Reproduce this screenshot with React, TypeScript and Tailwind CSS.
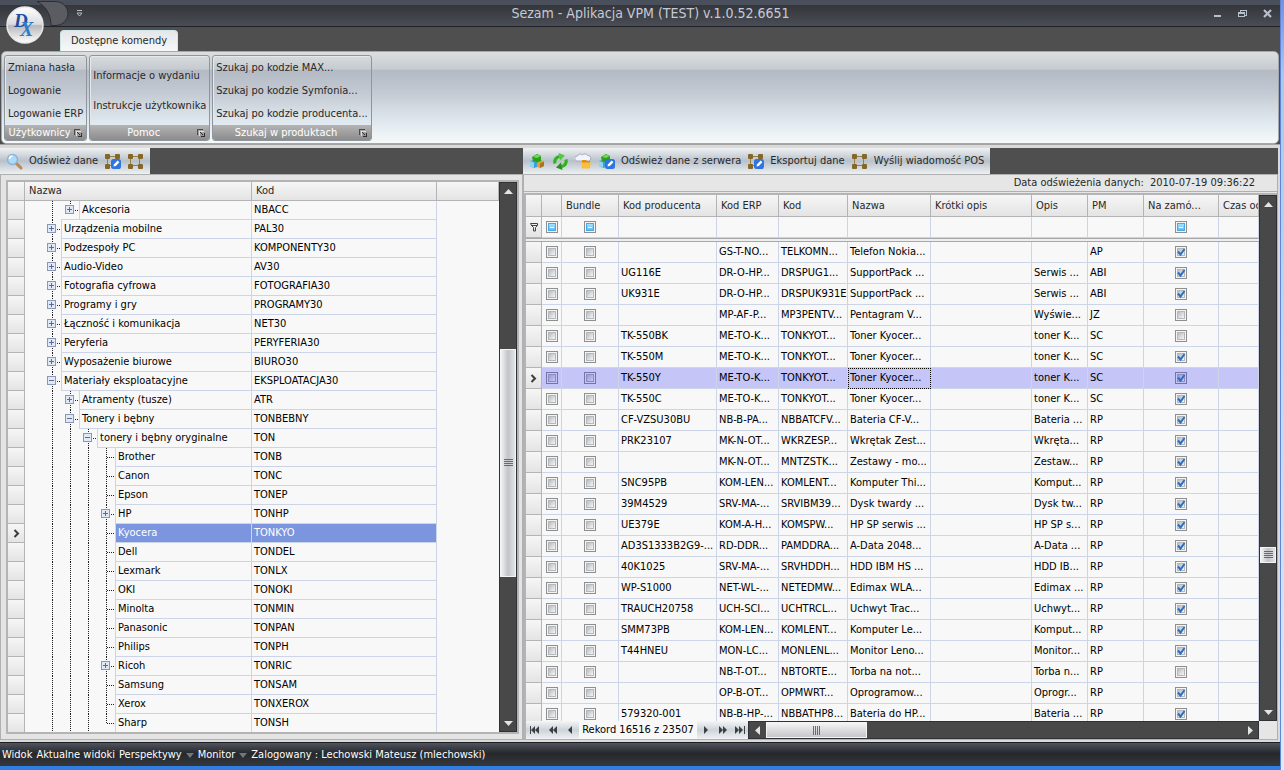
import { useId, type ReactNode } from "react";
import { clsx } from "clsx";

type TreeItem = {
  name: string;
  code: string;
  depth: number;
  state?: "open" | "closed";
  last?: boolean;
  selected?: boolean;
};

const treeItems: TreeItem[] = [
  { name: "Akcesoria", code: "NBACC", depth: 2, state: "closed", last: true },
  { name: "Urządzenia mobilne", code: "PAL30", depth: 1, state: "closed" },
  { name: "Podzespoły PC", code: "KOMPONENTY30", depth: 1, state: "closed" },
  { name: "Audio-Video", code: "AV30", depth: 1, state: "closed" },
  { name: "Fotografia cyfrowa", code: "FOTOGRAFIA30", depth: 1, state: "closed" },
  { name: "Programy i gry", code: "PROGRAMY30", depth: 1, state: "closed" },
  { name: "Łączność i komunikacja", code: "NET30", depth: 1, state: "closed" },
  { name: "Peryferia", code: "PERYFERIA30", depth: 1, state: "closed" },
  { name: "Wyposażenie biurowe", code: "BIURO30", depth: 1, state: "closed" },
  { name: "Materiały eksploatacyjne", code: "EKSPLOATACJA30", depth: 1, state: "open" },
  { name: "Atramenty (tusze)", code: "ATR", depth: 2, state: "closed" },
  { name: "Tonery i bębny", code: "TONBEBNY", depth: 2, state: "open" },
  { name: "tonery i bębny oryginalne", code: "TON", depth: 3, state: "open" },
  { name: "Brother", code: "TONB", depth: 4 },
  { name: "Canon", code: "TONC", depth: 4 },
  { name: "Epson", code: "TONEP", depth: 4 },
  { name: "HP", code: "TONHP", depth: 4, state: "closed" },
  { name: "Kyocera", code: "TONKYO", depth: 4, selected: true },
  { name: "Dell", code: "TONDEL", depth: 4 },
  { name: "Lexmark", code: "TONLX", depth: 4 },
  { name: "OKI", code: "TONOKI", depth: 4 },
  { name: "Minolta", code: "TONMIN", depth: 4 },
  { name: "Panasonic", code: "TONPAN", depth: 4 },
  { name: "Philips", code: "TONPH", depth: 4 },
  { name: "Ricoh", code: "TONRIC", depth: 4, state: "closed" },
  { name: "Samsung", code: "TONSAM", depth: 4 },
  { name: "Xerox", code: "TONXEROX", depth: 4 },
  { name: "Sharp", code: "TONSH", depth: 4, last: true },
];

type Product = {
  producer: string;
  erp: string;
  code: string;
  name: string;
  desc: string;
  pm: string;
  onOrder: boolean;
  selected?: boolean;
};

const products: Product[] = [
  { producer: "", erp: "GS-T-NO...", code: "TELKOMN...", name: "Telefon Nokia...", desc: "", pm: "AP", onOrder: true },
  { producer: "UG116E", erp: "DR-O-HP...", code: "DRSPUG1...", name: "SupportPack ...", desc: "Serwis ...", pm: "ABI", onOrder: true },
  { producer: "UK931E", erp: "DR-O-HP...", code: "DRSPUK931E", name: "SupportPack ...", desc: "Serwis ...", pm: "ABI", onOrder: true },
  { producer: "", erp: "MP-AF-P...", code: "MP3PENTV...", name: "Pentagram V...", desc: "Wyświe...", pm: "JZ", onOrder: false },
  { producer: "TK-550BK", erp: "ME-TO-K...", code: "TONKYOT...", name: "Toner Kyocer...", desc: "toner K...", pm: "SC", onOrder: false },
  { producer: "TK-550M", erp: "ME-TO-K...", code: "TONKYOT...", name: "Toner Kyocer...", desc: "toner K...", pm: "SC", onOrder: true },
  { producer: "TK-550Y", erp: "ME-TO-K...", code: "TONKYOT...", name: "Toner Kyocer...", desc: "toner K...", pm: "SC", onOrder: true, selected: true },
  { producer: "TK-550C", erp: "ME-TO-K...", code: "TONKYOT...", name: "Toner Kyocer...", desc: "toner K...", pm: "SC", onOrder: true },
  { producer: "CF-VZSU30BU", erp: "NB-B-PA...", code: "NBBATCFV...", name: "Bateria CF-V...", desc: "Bateria ...", pm: "RP", onOrder: true },
  { producer: "PRK23107", erp: "MK-N-OT...", code: "WKRZESP...", name: "Wkrętak Zest...", desc: "Wkręta...", pm: "RP", onOrder: true },
  { producer: "", erp: "MK-N-OT...", code: "MNTZSTK...", name: "Zestawy - mo...", desc: "Zestaw...", pm: "RP", onOrder: true },
  { producer: "SNC95PB", erp: "KOM-LEN...", code: "KOMLENT...", name: "Komputer Thi...", desc: "Komput...", pm: "RP", onOrder: true },
  { producer: "39M4529", erp: "SRV-MA-...", code: "SRVIBM39...", name: "Dysk twardy ...", desc: "Dysk tw...", pm: "RP", onOrder: true },
  { producer: "UE379E", erp: "KOM-A-H...", code: "KOMSPW...", name: "HP SP serwis ...", desc: "HP SP s...", pm: "RP", onOrder: true },
  { producer: "AD3S1333B2G9-...", erp: "RD-DDR...", code: "PAMDDRA...", name: "A-Data 2048...", desc: "A-Data ...", pm: "RP", onOrder: true },
  { producer: "40K1025", erp: "SRV-MA-...", code: "SRVHDDH...", name: "HDD IBM HS ...", desc: "HDD IB...", pm: "RP", onOrder: true },
  { producer: "WP-S1000", erp: "NET-WL-...", code: "NETEDMW...", name: "Edimax WLA...", desc: "Edimax ...", pm: "RP", onOrder: true },
  { producer: "TRAUCH20758", erp: "UCH-SCI...", code: "UCHTRCL...", name: "Uchwyt Trac...", desc: "Uchwyt...", pm: "RP", onOrder: true },
  { producer: "SMM73PB", erp: "KOM-LEN...", code: "KOMLENT...", name: "Komputer Le...", desc: "Komput...", pm: "RP", onOrder: true },
  { producer: "T44HNEU", erp: "MON-LC...", code: "MONLENL...", name: "Monitor Leno...", desc: "Monitor...", pm: "RP", onOrder: true },
  { producer: "", erp: "NB-T-OT...", code: "NBTORTE...", name: "Torba na not...", desc: "Torba n...", pm: "RP", onOrder: false },
  { producer: "", erp: "OP-B-OT...", code: "OPMWRT...", name: "Oprogramow...", desc: "Oprogr...", pm: "RP", onOrder: true },
  { producer: "579320-001", erp: "NB-B-HP-...", code: "NBBATHP8...", name: "Bateria do HP...", desc: "Bateria ...", pm: "RP", onOrder: true },
];

function Logo() {
  const id = useId();
  return (
    <svg viewBox="0 0 38 38" className="block h-[38px] w-[38px]" aria-hidden="true">
      <defs>
        <linearGradient id={id} x1="0" y1="0" x2="0" y2="1">
          <stop offset="0" stopColor="#ffffff" />
          <stop offset="0.48" stopColor="#dcdcde" />
          <stop offset="0.52" stopColor="#b8b8bc" />
          <stop offset="1" stopColor="#ffffff" />
        </linearGradient>
      </defs>
      <circle cx="19" cy="19" r="18" fill={`url(#${id})`} stroke="#e8e8ea" strokeWidth="1.5" />
      <text x="8" y="21" fontFamily="Liberation Serif" fontStyle="italic" fontWeight="700" fontSize="19" fill="#1d4f9c">D</text>
      <text x="14" y="30" fontFamily="Liberation Serif" fontStyle="italic" fontWeight="700" fontSize="20" fill="#2d7bcb">X</text>
    </svg>
  );
}

function PencilBadge() {
  return (
    <g>
      <rect x="7" y="6" width="10" height="10" rx="2.5" fill="#2f74e0" />
      <path d="M9.5 13.5l.6-2.3 3.6-3.6 1.7 1.7-3.6 3.6z" fill="#fff" />
    </g>
  );
}

function NodesIcon({ badge }: { badge?: boolean }) {
  return (
    <svg viewBox="0 0 17 17" className="h-[17px] w-[17px] shrink-0" aria-hidden="true">
      <path d="M3.5 3.5h9v9h-9z" fill="none" stroke="#9a8040" />
      <g fill="#86672a">
        <rect x="1" y="1" width="5" height="5" rx="1" />
        <rect x="11" y="1" width="5" height="5" rx="1" />
        <rect x="1" y="11" width="5" height="5" rx="1" />
        <rect x="11" y="11" width="5" height="5" rx="1" />
      </g>
      {badge && <PencilBadge />}
    </svg>
  );
}

function SearchIcon() {
  return (
    <svg viewBox="0 0 17 17" className="h-[17px] w-[17px] shrink-0" aria-hidden="true">
      <path d="M10.5 10.5l4.5 4.5" stroke="#b98a55" strokeWidth="3" strokeLinecap="round" />
      <circle cx="6.5" cy="6.5" r="5" fill="#a8dcf8" stroke="#8fb0d0" strokeWidth="1.4" />
      <path d="M3.5 6a3 3 0 013-3" stroke="#fff" strokeWidth="1.5" fill="none" />
    </svg>
  );
}

function CubesIcon({ badge }: { badge?: boolean }) {
  return (
    <svg viewBox="0 0 17 17" className="h-[17px] w-[17px] shrink-0" aria-hidden="true">
      <path d="M1 8l4-1 3 2v5l-3 1-4-2z" fill="#3d9fd6" />
      <path d="M1 8l4 1.5V15l-4-2z" fill="#8fd4f2" />
      <path d="M8 9l4-2 3 1.5V13l-4 2-3-1z" fill="#d8a33c" />
      <path d="M11 10.5l4-2V13l-4 2z" fill="#a87420" />
      <path d="M3 4l5-3 4 2v5L8 9.5 4 8z" fill="#2aa01c" />
      <path d="M4 4l4-2.5L12 3 8 5z" fill="#6fdc4c" />
      {badge && <PencilBadge />}
    </svg>
  );
}

function RefreshIcon() {
  return (
    <svg viewBox="0 0 17 17" className="h-[17px] w-[17px] shrink-0" aria-hidden="true">
      <path d="M3 10.5a5.5 5.5 0 014.5-7" stroke="#2fb41e" strokeWidth="3.2" fill="none" />
      <path d="M6.500 0L13 2.500 8 7.500z" fill="#4ccc38" />
      <path d="M14 6.500a5.500 5.500 0 01-4.500 7" stroke="#2fb41e" strokeWidth="3.2" fill="none" />
      <path d="M10.500 17L4 14.500 9 9.500z" fill="#22941a" />
    </svg>
  );
}

function FolderIcon() {
  return (
    <svg viewBox="0 0 17 17" className="h-[17px] w-[17px] shrink-0" aria-hidden="true">
      <path d="M2 8a2.5 2.5 0 01.5-5 3 3 0 015-1 3 3 0 015 .5 2.600 2.600 0 011 5.500z" fill="#f2f4fb" stroke="#a4aac4" />
      <path d="M7 7h4l1 1h3v7H7z" fill="#d98e14" />
      <path d="M6 9.500h10L14.500 15.500h-7z" fill="#fcbf3a" />
    </svg>
  );
}

function LauncherIcon() {
  return (
    <svg viewBox="0 0 8 8" className="h-2 w-2" shapeRendering="crispEdges" aria-hidden="true">
      <path d="M.5 5.5v-5h5" fill="none" stroke="#4c4c4c" />
      <path d="M2.5 6.5v-4h4" fill="none" stroke="#e0e0e0" />
      <path d="M3.5 3.5l3 3M7.5 3.5v4h-4" fill="none" stroke="#303030" />
    </svg>
  );
}

const arrowRotation = {
  up: "",
  right: "rotate-90",
  down: "rotate-180",
  left: "-rotate-90",
};

function Arrow({ dir }: { dir: keyof typeof arrowRotation }) {
  return (
    <svg viewBox="0 0 9 5" className={clsx("h-[5px] w-[9px]", arrowRotation[dir])} aria-hidden="true">
      <path d="M0 5l4.5-5L9 5z" fill="#e4e4e4" />
    </svg>
  );
}

function Scrollbar({ vertical, before, thumb, after }: { vertical?: boolean; before: number; thumb: number; after: number }) {
  return (
    <div
      className={clsx(
        "flex border border-[#2e3236] bg-[#484848]",
        vertical ? "w-[18px] shrink-0 flex-col" : "h-[18px] min-w-0 flex-1",
      )}
    >
      <button
        aria-label={vertical ? "W górę" : "W lewo"}
        className={clsx("flex shrink-0 items-center justify-center", vertical ? "h-4 w-full" : "h-full w-4")}
      >
        <Arrow dir={vertical ? "up" : "left"} />
      </button>
      <div className="basis-0" style={{ flexGrow: before }} />
      <div
        style={{ flexGrow: thumb }}
        className={clsx(
          "flex basis-0 items-center justify-center overflow-hidden border border-[#f4f4f4]",
          vertical
            ? "min-h-0 bg-linear-to-r from-[#f4f4f6] via-[#c2c3c8] to-[#e4e4e6]"
            : "min-w-0 bg-linear-to-b from-[#f4f4f6] via-[#dcdcdf] to-[#c6c7ca]",
        )}
      >
        <svg viewBox="0 0 9 9" className={clsx("h-[9px] w-[9px] shrink-0", !vertical && "rotate-90")} shapeRendering="crispEdges" aria-hidden="true">
          <path d="M0 1.5h9M0 3.5h9M0 5.5h9M0 7.5h9" stroke="#6a6a6e" />
        </svg>
      </div>
      <div className="basis-0" style={{ flexGrow: after }} />
      <button
        aria-label={vertical ? "W dół" : "W prawo"}
        className={clsx("flex shrink-0 items-center justify-center", vertical ? "h-4 w-full" : "h-full w-4")}
      >
        <Arrow dir={vertical ? "down" : "right"} />
      </button>
    </div>
  );
}

function RowMarker() {
  return (
    <svg viewBox="0 0 7 9" className="mx-auto h-[9px] w-[7px]" aria-hidden="true">
      <path d="M1.5 1l3.5 3.5L1.5 8" fill="none" stroke="#3c3c3c" strokeWidth="2" />
    </svg>
  );
}

function Check({ label, checked, mixed, tinted }: { label: string; checked?: boolean; mixed?: boolean; tinted?: boolean }) {
  return (
    <span className="mx-auto grid h-3 w-3 place-items-center">
      <input
        type="checkbox"
        aria-label={label}
        defaultChecked={checked}
        className={clsx(
          "col-start-1 row-start-1 h-3 w-3 appearance-none border",
          tinted ? "border-[#7474a8] bg-[#c5c5f8]" : "border-[#8e8f8f] bg-[#f4f4f4]",
        )}
      />
      {mixed ? (
        <span className="pointer-events-none col-start-1 row-start-1 flex h-2 w-2 items-center border border-[#4aa8e4] bg-linear-to-b from-[#a8e0fc] to-[#5cbcf4]">
          <span className="mx-auto h-px w-1 bg-white" />
        </span>
      ) : (
        <span
          className={clsx(
            "pointer-events-none col-start-1 row-start-1 h-2 w-2 border bg-linear-to-br",
            tinted ? "border-[#8c8cc4] from-[#9a9acc] to-[#c5c5f8]" : "border-[#b4b8bc] from-[#b8bcc0] to-[#f6f6f6]",
          )}
        />
      )}
      {checked && (
        <svg viewBox="0 0 10 10" className="pointer-events-none z-10 col-start-1 row-start-1 h-2.5 w-2.5" aria-hidden="true">
          <path d="M2 4.500L4.500 7.500 8.500 2" fill="none" stroke="#2a6fc4" strokeWidth="2" />
        </svg>
      )}
    </span>
  );
}

function RibbonGroup({ title, items, tall }: { title: string; items: string[]; tall?: boolean }) {
  return (
    <section className="flex flex-col overflow-hidden rounded-[3px] border border-[#8f959c] shadow-[inset_1px_1px_0_#e6e9ec]">
      <div className="flex flex-1 flex-col items-start justify-center px-[3px]">
        {items.map((item) => (
          <button key={item} className={clsx("whitespace-nowrap", tall ? "h-[30px]" : "h-[23px]")}>
            {item}
          </button>
        ))}
      </div>
      <div className="flex h-[15px] items-center bg-linear-to-b from-[#b4b4b4] to-[#8c8c8c] pr-1 text-white">
        <h2 className="flex-1 text-center whitespace-nowrap">{title}</h2>
        <button aria-label={`${title} - więcej`}>
          <LauncherIcon />
        </button>
      </div>
    </section>
  );
}

function Toolbar({ children }: { children: ReactNode }) {
  return (
    <div className="flex h-[26px] shrink-0 bg-[#4f4f4f]">
      <div className="flex items-center gap-1.5 bg-linear-to-b from-[#f0f2f3] via-[#b8c1ca] to-[#edf1f3] px-1.5 whitespace-nowrap text-[#282828]">
        {children}
      </div>
    </div>
  );
}

function ToolButton({ icon, label, title }: { icon: ReactNode; label?: string; title?: string }) {
  return (
    <button aria-label={label ?? title} className="flex items-center gap-1.5">
      {icon}
      {label}
    </button>
  );
}

const headCell =
  "overflow-hidden border-r border-b border-[#b4b4b4] bg-linear-to-b from-[#f6f6f6] to-[#e4e4e4] px-1 text-left font-normal whitespace-nowrap text-[#282828]";
const indicatorCell = "border-r border-b border-[#b4b4b4] bg-linear-to-b from-[#f6f6f6] to-[#e4e4e4] p-0";

function TreeGuide({ kind, item, line }: { kind: "through" | "node"; item: TreeItem; line: boolean }) {
  const isNode = kind === "node";
  return (
    <svg viewBox="0 0 18 19" className="h-[19px] w-[18px] shrink-0" shapeRendering="crispEdges" aria-hidden="true">
      <path d={isNode && item.last ? "M9.5 0v10" : "M9.5 0v19"} stroke="#202020" strokeDasharray="1 1" />
      {isNode && <path d="M10 9.5h8" stroke="#202020" strokeDasharray="1 1" />}
      {line && <path d="M0 18.5h18" stroke="#ccd5e8" />}
      {isNode && item.state && (
        <g>
          <rect x="4.5" y="4.5" width="8" height="8" rx="1" fill="#e2e9f6" stroke="#8a98b8" />
          <path d={item.state === "closed" ? "M6 8.5h5M8.5 6v5" : "M6 8.5h5"} stroke="#5c6c94" />
        </g>
      )}
    </svg>
  );
}

function TreePanel() {
  return (
    <section className="flex w-[523px] shrink-0 flex-col">
      <Toolbar>
        <ToolButton icon={<SearchIcon />} label="Odśwież dane" />
        <ToolButton icon={<NodesIcon badge />} title="Eksportuj" />
        <ToolButton icon={<NodesIcon />} title="Wyślij" />
      </Toolbar>
      <div className="flex min-h-0 flex-1 border border-[#b0b0b0] bg-[#e4e4e4] py-[5px] pr-[3px] pl-[5px]">
        <div className="flex min-h-0 flex-1 border-2 border-[#b4b4b4] bg-[#f8f8f8]">
          <div className="min-w-0 flex-1 overflow-hidden">
            <table className="w-full table-fixed border-separate border-spacing-0">
              <colgroup>
                <col className="w-[17px]" />
                <col className="w-[227px]" />
                <col className="w-[185px]" />
                <col />
              </colgroup>
              <thead>
                <tr className="h-[19px]">
                  <th className={headCell} aria-label="Wiersz" />
                  <th className={headCell}>Nazwa</th>
                  <th className={headCell}>Kod</th>
                  <th className={headCell} aria-label="Puste" />
                </tr>
              </thead>
              <tbody>
                {treeItems.map((item, i) => {
                  const nextDepth = treeItems[i + 1]?.depth ?? 3;
                  return (
                    <tr key={item.code} className="h-[19px]">
                      <td className={indicatorCell}>{item.selected && <RowMarker />}</td>
                      <td className="p-0">
                        <div className="flex h-[19px] pl-[18px]">
                          {Array.from({ length: item.depth }, (_, level) => (
                            <TreeGuide
                              key={level}
                              kind={level === item.depth - 1 ? "node" : "through"}
                              item={item}
                              line={level >= nextDepth}
                            />
                          ))}
                          <span
                            className={clsx(
                              "flex-1 overflow-hidden border-r border-b border-l border-[#ccd5e8] pl-0.5 leading-[18px] whitespace-nowrap",
                              item.selected && "bg-[#7b95de] text-white",
                            )}
                          >
                            {item.name}
                          </span>
                        </div>
                      </td>
                      <td
                        className={clsx(
                          "border-r border-b border-[#ccd5e8] px-0.5 py-0",
                          item.selected && "bg-[#7b95de] text-white",
                        )}
                      >
                        {item.code}
                      </td>
                      <td />
                    </tr>
                  );
                })}
              </tbody>
            </table>
          </div>
          <Scrollbar vertical before={152} thumb={228} after={140} />
        </div>
      </div>
    </section>
  );
}

function ProductGrid() {
  const cell = "overflow-hidden border-r border-b border-[#ccd5e8] px-0.5 py-0 whitespace-nowrap";
  const checkCell = "border-r border-b border-[#ccd5e8] p-0";
  return (
    <table className="w-full table-fixed border-separate border-spacing-0">
      <colgroup>
        <col className="w-4" />
        <col className="w-5" />
        <col className="w-[57px]" />
        <col className="w-[98px]" />
        <col className="w-[62px]" />
        <col className="w-[69px]" />
        <col className="w-[83px]" />
        <col className="w-[101px]" />
        <col className="w-14" />
        <col className="w-14" />
        <col className="w-[75px]" />
        <col />
      </colgroup>
      <thead>
        <tr className="h-[22px]">
          <th className={headCell} aria-label="Wiersz" />
          <th className={headCell} aria-label="Zaznacz" />
          <th className={headCell}>Bundle</th>
          <th className={headCell}>Kod producenta</th>
          <th className={headCell}>Kod ERP</th>
          <th className={headCell}>Kod</th>
          <th className={headCell}>Nazwa</th>
          <th className={headCell}>Krótki opis</th>
          <th className={headCell}>Opis</th>
          <th className={headCell}>PM</th>
          <th className={headCell}>Na zamó...</th>
          <th className={headCell}>Czas oc</th>
        </tr>
      </thead>
      <tbody>
        <tr className="h-[21px]">
          <td className={indicatorCell}>
            <svg viewBox="0 0 8 10" className="mx-auto h-2.5 w-2" aria-hidden="true">
              <path d="M.5 1.5h7v2l-2 2v3.5h-2V5.5l-2-2zM1 3.5h6" fill="none" stroke="#444" />
            </svg>
          </td>
          <td className={checkCell}><Check label="Filtr zaznaczenia" mixed /></td>
          <td className={checkCell}><Check label="Filtr Bundle" mixed /></td>
          {["producent", "erp", "kod", "nazwa", "krotki", "opis", "pm"].map((key) => (
            <td key={key} className={cell} />
          ))}
          <td className={checkCell}><Check label="Filtr Na zamówienie" mixed /></td>
          <td className={cell} />
        </tr>
        <tr className="h-1">
          <td colSpan={12} className="border-t border-b border-[#a8a8a8] bg-[#eeeeee] p-0" />
        </tr>
        {products.map((p, i) => {
          const tone = p.selected && "border-[#a4a4ec] bg-[#c5c5f8]";
          return (
            <tr key={i} className="h-[21px]">
              <td className={indicatorCell}>{p.selected && <RowMarker />}</td>
              <td className={clsx(checkCell, tone)}><Check label={`Zaznacz ${p.name}`} tinted={p.selected} /></td>
              <td className={clsx(checkCell, tone)}><Check label={`Bundle ${p.name}`} tinted={p.selected} /></td>
              <td className={clsx(cell, tone)}>{p.producer}</td>
              <td className={clsx(cell, tone)}>{p.erp}</td>
              <td className={clsx(cell, tone)}>{p.code}</td>
              <td className={clsx(cell, tone, p.selected && "outline outline-dotted -outline-offset-1 outline-black")}>{p.name}</td>
              <td className={clsx(cell, tone)} />
              <td className={clsx(cell, tone)}>{p.desc}</td>
              <td className={clsx(cell, tone)}>{p.pm}</td>
              <td className={clsx(checkCell, tone)}>
                <Check label={`Na zamówienie ${p.name}`} checked={p.onOrder} tinted={p.selected} />
              </td>
              <td className={clsx(cell, tone)} />
            </tr>
          );
        })}
      </tbody>
    </table>
  );
}

function NavButton({ label, d }: { label: string; d: string }) {
  return (
    <button aria-label={label} className="flex flex-1 items-center justify-center">
      <svg viewBox="0 0 10 8" className="h-2 w-2.5" fill="#3c4044" aria-hidden="true">
        <path d={d} />
      </svg>
    </button>
  );
}

function RecordNavigator() {
  return (
    <div className="flex w-[222px] shrink-0 bg-[#f8f8f8] whitespace-nowrap">
      <div className="flex w-[53px] bg-linear-to-b from-[#f4f5f6] via-[#ccd4da] to-[#eef2f4]">
        <NavButton label="Pierwszy" d="M0 0h1v8H0zM5 0v8L1 4zM9 0v8L5 4z" />
        <NavButton label="Poprzednia strona" d="M5 0v8L1 4zM9 0v8L5 4z" />
        <NavButton label="Poprzedni" d="M7 0v8L3 4z" />
      </div>
      <span className="flex flex-1 items-center justify-center">Rekord 16516 z 23507</span>
      <div className="flex w-[51px] bg-linear-to-b from-[#f4f5f6] via-[#ccd4da] to-[#eef2f4]">
        <NavButton label="Następny" d="M3 0v8l4-4z" />
        <NavButton label="Następna strona" d="M1 0v8l4-4zM5 0v8l4-4z" />
        <NavButton label="Ostatni" d="M0 0v8l4-4zM4 0v8l4-4zM9 0h1v8H9z" />
      </div>
    </div>
  );
}

function ProductPanel() {
  return (
    <section className="flex min-w-0 flex-1 flex-col">
      <Toolbar>
        <ToolButton icon={<CubesIcon />} title="Produkty" />
        <ToolButton icon={<RefreshIcon />} title="Odśwież" />
        <ToolButton icon={<FolderIcon />} title="Otwórz" />
        <ToolButton icon={<CubesIcon badge />} label="Odśwież dane z serwera" />
        <ToolButton icon={<NodesIcon badge />} label="Eksportuj dane" />
        <ToolButton icon={<NodesIcon />} label="Wyślij wiadomość POS" />
      </Toolbar>
      <div className="flex min-h-0 flex-1 flex-col border border-[#b0b0b0] bg-[#e6e6e6]">
        <p className="flex h-[17px] shrink-0 items-center justify-end gap-1.5 border-b border-[#b0b0b0] pr-[22px] text-[#282828]">
          <span>Data odświeżenia danych:</span>
          <span>2010-07-19 09:36:22</span>
        </p>
        <div className="mt-px flex min-h-0 flex-1 flex-col border-t-2 border-l-2 border-[#b4b4b4]">
          <div className="flex min-h-0 flex-1">
            <div className="min-w-0 flex-1 overflow-hidden bg-[#f8f8f8]">
              <ProductGrid />
            </div>
            <Scrollbar vertical before={336} thumb={14} after={142} />
          </div>
          <div className="flex h-[18px] shrink-0">
            <RecordNavigator />
            <Scrollbar before={1} thumb={100} after={378} />
            <div className="w-[18px]" />
          </div>
        </div>
      </div>
    </section>
  );
}

function TitleBar() {
  return (
    <header className="relative flex h-[27px] shrink-0 items-center border-b border-[#20242a] bg-linear-to-b from-[#4a4f5c] from-[18%] via-[#34363a] via-[19%] to-[#4a4d55] pr-2 pl-6">
      <svg viewBox="0 0 90 27" className="absolute top-0 left-0 h-[27px] w-[90px]" aria-hidden="true">
        <path d="M37 1.5h19a12 12 0 010 24h-5c0-12-6-20-14-24z" fill="#5a5c62" stroke="#2c2e32" />
        <path d="M77 10.5h5M77 13h5l-2.5 3z" fill="none" stroke="#b8bcc8" />
      </svg>
      <button aria-label="Menu aplikacji" className="absolute top-[6px] left-[6px] z-10 rounded-full">
        <Logo />
      </button>
      <h1 className="flex-1 pl-16 text-center text-sm whitespace-nowrap text-[#c6cad6]">
        Sezam - Aplikacja VPM (TEST) v.1.0.52.6651
      </h1>
      <div className="flex items-center gap-4 text-[#b8c0cc]">
        <button aria-label="Minimalizuj">
          <svg viewBox="0 0 9 9" className="h-[9px] w-[9px]"><path d="M1 6h7v2H1z" fill="currentColor" /></svg>
        </button>
        <button aria-label="Przywróć">
          <svg viewBox="0 0 9 9" className="h-[9px] w-[9px]" shapeRendering="crispEdges">
            <path d="M2.5 3V1.5h6v5H7M.5 3.5h6v4h-6zM0 4h7" fill="none" stroke="currentColor" />
          </svg>
        </button>
        <button aria-label="Zamknij">
          <svg viewBox="0 0 9 9" className="h-[9px] w-[9px]">
            <path d="M1 1l7 7M8 1L1 8" stroke="currentColor" strokeWidth="2.2" />
          </svg>
        </button>
      </div>
    </header>
  );
}

function Ribbon() {
  return (
    <>
      <nav className="flex h-6 shrink-0 items-end bg-[#4f4f4f] pl-[60px]">
        <button className="h-[21px] rounded-t border border-b-0 border-[#cfe6ea] bg-linear-to-b from-[#e4e6e8] to-[#f8f8f8] px-2.5 text-[#282828]">
          Dostępne komendy
        </button>
      </nav>
      <div className="shrink-0 bg-[#4f4f4f] px-px">
        <div className="flex h-[93px] gap-0.5 rounded-[5px] border border-[#a4a8ac] bg-[linear-gradient(to_bottom,#dcdfe1_0%,#c6cbd0_19%,#b4bac4_20%,#c4cad3_45%,#dee7ee_75%,#f6f9fa_100%)] px-0.5 pt-[3px] pb-0.5 text-[#282828]">
          <RibbonGroup title="Użytkownicy" items={["Zmiana hasła", "Logowanie", "Logowanie ERP"]} />
          <RibbonGroup title="Pomoc" items={["Informacje o wydaniu", "Instrukcje użytkownika"]} tall />
          <RibbonGroup
            title="Szukaj w produktach"
            items={["Szukaj po kodzie MAX...", "Szukaj po kodzie Symfonia...", "Szukaj po kodzie producenta..."]}
          />
        </div>
      </div>
    </>
  );
}

function StatusBar() {
  const caret = (
    <svg viewBox="0 0 8 5" className="h-[5px] w-2" aria-hidden="true">
      <path d="M0 0h8L4 5z" fill="#70767e" />
    </svg>
  );
  return (
    <footer className="flex h-6 shrink-0 items-center gap-1 border-t border-[#1c1e22] bg-linear-to-b from-[#50545e] via-[#26282c] via-45% to-[#34373c] px-0.5 pt-px whitespace-nowrap text-white">
      <button>Widok</button>
      <button>Aktualne widoki</button>
      <button className="flex items-center gap-1">Perspektywy {caret}</button>
      <button className="flex items-center gap-1">Monitor {caret}</button>
      <span>Zalogowany : Lechowski Mateusz (mlechowski)</span>
    </footer>
  );
}

export default function App() {
  return (
    <div className="flex h-screen overflow-hidden bg-[#2f7ee2] font-['DejaVu_Sans_Condensed','Noto_Sans',sans-serif] text-[11px] leading-[14px] text-black">
      <div className="flex min-w-0 flex-1 flex-col pb-1">
        <TitleBar />
        <Ribbon />
        <main className="flex min-h-0 flex-1 border-t border-[#a4a4a4] bg-[#dadada] pt-[3px] pr-0.5 pb-0.5">
          <TreePanel />
          <ProductPanel />
        </main>
        <StatusBar />
      </div>
      <div className="w-1 shrink-0 border-l border-[#5d87d4] bg-linear-to-b from-[#7d8de0] via-[#a9c8f6] via-10% to-[#dfeafa]" />
    </div>
  );
}
